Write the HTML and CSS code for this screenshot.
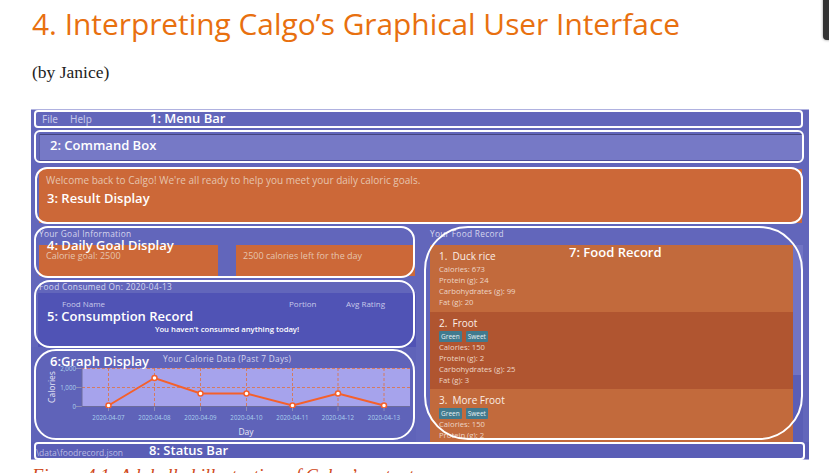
FILE: index.html
```html
<!DOCTYPE html>
<html lang="en">
<head>
    <meta charset="UTF-8">
    <title>Interpreting Calgo's Graphical User Interface</title>
    <link rel="stylesheet" href="styles.css">
</head>
<body>

<div class="side-tab"></div>

<h1>4. Interpreting Calgo’s Graphical User Interface</h1>
<p class="byline">(by Janice)</p>

<div class="figure">
    <div class="menu-bar"><span>File</span><span>Help</span></div>
    <div class="command-box"></div>
    <div class="result-box">Welcome back to Calgo! We're all ready to help you meet your daily caloric goals.</div>

    <div class="columns">
        <div class="left-col">
            <div class="pane-title">Your Goal Information</div>
            <div class="goal-row">
                <div class="goal-card">Calorie goal: 2500</div>
                <div class="goal-card">2500 calories left for the day</div>
            </div>
            <div class="pane-title consumed-title">Food Consumed On: 2020-04-13</div>
            <div class="consumed">
                <div class="consumed-head"><span class="col-name">Food Name</span><span class="col-portion">Portion</span><span>Avg Rating</span></div>
                <div class="consumed-empty">You haven't consumed anything today!</div>
            </div>
            <div class="graph">
                <div class="graph-title">Your Calorie Data (Past 7 Days)</div>
                <svg class="chart" width="375" height="74" viewBox="0 0 375 74">
                    <clipPath id="plot-clip"><rect x="0" y="-4" width="375" height="44"/></clipPath>
                    <rect x="46" y="0" width="328" height="38" fill="#a6a3ec"/>
                    <g stroke="#dc7448" stroke-width="1" stroke-dasharray="3 2" stroke-opacity=".85" fill="none">
                        <path d="M46 .5H374M46 19.5H374"/>
                        <path d="M72.5 0V38M118.5 0V38M164.5 0V38M210.5 0V38M256.5 0V38M302 0V38M348 0V38"/>
                    </g>
                    <g stroke="#8f8fb8" stroke-width="1">
                        <path d="M72.5 38V43M118.5 38V43M164.5 38V43M210.5 38V43M256.5 38V43M302 38V43M348 38V43"/>
                        <path d="M40 .5H46M40 19.5H46M40 38.5H46"/>
                    </g>
                    <path d="M46 0V38.5H374" fill="none" stroke="#6c6c9c" stroke-width="1"/>
                    <polyline points="72.5,37.5 118.5,10 164.5,25.5 210.5,25.5 256.5,37.5 302,25.5 348,37.5" fill="none" stroke="#f5602a" stroke-width="2"/>
                    <g fill="#fff" stroke="#f5602a" stroke-width="1.5" clip-path="url(#plot-clip)">
                        <circle cx="72.5" cy="37.5" r="2.5"/>
                        <circle cx="118.5" cy="10" r="2.5"/>
                        <circle cx="164.5" cy="25.5" r="2.5"/>
                        <circle cx="210.5" cy="25.5" r="2.5"/>
                        <circle cx="256.5" cy="37.5" r="2.5"/>
                        <circle cx="302" cy="25.5" r="2.5"/>
                        <circle cx="348" cy="37.5" r="2.5"/>
                    </g>
                    <g class="tick-y" text-anchor="end">
                        <text x="40" y="2.5">2,000</text>
                        <text x="40" y="21.5">1,000</text>
                        <text x="40" y="40.5">0</text>
                    </g>
                    <g class="tick-x" text-anchor="middle">
                        <text x="72.5" y="51.5">2020-04-07</text>
                        <text x="118.5" y="51.5">2020-04-08</text>
                        <text x="164.5" y="51.5">2020-04-09</text>
                        <text x="210.5" y="51.5">2020-04-10</text>
                        <text x="256.5" y="51.5">2020-04-11</text>
                        <text x="302" y="51.5">2020-04-12</text>
                        <text x="348" y="51.5">2020-04-13</text>
                    </g>
                    <text class="axis-name" x="210" y="67" text-anchor="middle">Day</text>
                    <text class="axis-name" transform="translate(19 19) rotate(-90)" text-anchor="middle">Calories</text>
                </svg>
            </div>
        </div>

        <div class="right-col">
            <div class="pane-title">Your Food Record</div>
            <div class="food-scroll">
                <div class="food-list">
                    <div class="food-card">
                        <div class="food-name">1.&nbsp; Duck rice</div>
                        <div>Calories: 673</div>
                        <div>Protein (g): 24</div>
                        <div>Carbohydrates (g): 99</div>
                        <div>Fat (g): 20</div>
                    </div>
                    <div class="food-card dark">
                        <div class="food-name">2.&nbsp; Froot</div>
                        <div class="tags"><span>Green</span><span>Sweet</span></div>
                        <div>Calories: 150</div>
                        <div>Protein (g): 2</div>
                        <div>Carbohydrates (g): 25</div>
                        <div>Fat (g): 3</div>
                    </div>
                    <div class="food-card">
                        <div class="food-name">3.&nbsp; More Froot</div>
                        <div class="tags"><span>Green</span><span>Sweet</span></div>
                        <div>Calories: 150</div>
                        <div>Protein (g): 2</div>
                    </div>
                </div>
                <div class="scrollbar"><div class="thumb"></div></div>
            </div>
        </div>
    </div>

    <div class="status-bar">\data\foodrecord.json</div>

    <!-- white outlines and labels drawn on top of the screenshot -->
    <div class="ring ring-1"></div>
    <div class="ring ring-2"></div>
    <div class="ring ring-3"></div>
    <div class="ring ring-4"></div>
    <div class="ring ring-5"></div>
    <div class="ring ring-6"></div>
    <div class="ring ring-7"></div>
    <div class="ring ring-8"></div>
    <div class="label label-1">1: Menu Bar</div>
    <div class="label label-2">2: Command Box</div>
    <div class="label label-3">3: Result Display</div>
    <div class="label label-4">4: Daily Goal Display</div>
    <div class="label label-5">5: Consumption Record</div>
    <div class="label label-6">6:Graph Display</div>
    <div class="label label-7">7: Food Record</div>
    <div class="label label-8">8: Status Bar</div>
</div>

<p class="caption">Figure 4.1: A labelled illustration of Calgo’s output</p>

</body>
</html>
```

FILE: styles.css
```css
html, body {
    height: 473px;
    overflow: hidden;
}

body {
    margin: 0;
    padding-left: 31px;
    background-color: #fff;
    font-family: "Liberation Serif", serif;
    position: relative;
}

h1 {
    margin: 0;
    padding: 3px 0 0 1px;
    font-family: "Open Sans", sans-serif;
    font-weight: 400;
    font-size: 29.85px;
    line-height: 41px;
    color: #e8700f;
}

.byline {
    margin: 0;
    padding: 18px 0 0 1px;
    font-size: 17.5px;
    line-height: 20px;
    color: #222;
}

.side-tab {
    position: absolute;
    top: -4px;
    right: -6px;
    width: 12px;
    height: 44px;
    background-color: #333;
    border-radius: 4px;
    box-shadow: 0 0 3px #888;
}

.figure {
    position: relative;
    box-sizing: border-box;
    width: 778px;
    height: 351px;
    margin-top: 27px;
    padding-top: 2px;
    background-color: #6266bb;
    border-top: 1px solid #b0b2e0;
    font-family: "Open Sans", sans-serif;
    color: #fff;
}

.menu-bar {
    height: 16px;
    padding-left: 11px;
    display: flex;
    gap: 12px;
    font-family: "Noto Sans", sans-serif;
    font-size: 10px;
    line-height: 14px;
    color: #c5c6e8;
}

.command-box {
    height: 25px;
    margin: 6px 7px 0 8px;
    background-color: #7679c6;
    border-top: 1px solid #44447e;
    border-bottom: 1px solid #4d4f99;
    border-left: 1px solid #5a5da8;
}

.result-box {
    height: 54px;
    margin: 8px 7px 0 8px;
    padding: 4px 0 0 7px;
    box-sizing: border-box;
    background-color: #cc6838;
    font-size: 10px;
    line-height: 14px;
    color: #e6c4ae;
}

.columns {
    display: flex;
    height: 219px;
}

.left-col {
    width: 385px;
    padding-left: 8px;
    padding-top: 6px;
    box-sizing: border-box;
}

.pane-title {
    height: 16px;
    font-size: 8.3px;
    line-height: 10px;
    letter-spacing: .3px;
    color: #d6d6ee;
}

.goal-row {
    display: flex;
    gap: 18px;
}

.goal-card {
    width: 179px;
    height: 31px;
    box-sizing: border-box;
    padding: 4px 0 0 7px;
    background-color: #cc6838;
    font-size: 9px;
    line-height: 14px;
    color: #e6c4ae;
}

.pane-title.consumed-title {
    margin-top: 6px;
    height: 11px;
}

.consumed {
    height: 54px;
    margin-left: -1px;
    background-color: #5053b5;
    font-size: 8px;
}

.consumed-head {
    display: flex;
    padding-top: 5px;
    line-height: 12px;
    color: #c8c9ea;
}

.col-name {
    margin-left: 24px;
    width: 227px;
}

.col-portion {
    width: 57px;
}

.consumed-empty {
    margin-top: 13px;
    font-size: 7.7px;
    font-weight: 600;
    line-height: 12px;
    text-align: center;
}

.graph {
    height: 95px;
    margin-left: -8px;
    background-color: #5f63b9;
}

.graph-title {
    height: 17px;
    padding: 7px 0 0 132px;
    box-sizing: border-box;
    font-size: 8.3px;
    line-height: 10px;
    letter-spacing: .3px;
    color: #d6d6ee;
    white-space: nowrap;
}

.chart {
    display: block;
    margin-top: 4px;
    margin-left: 5px;
    overflow: visible;
}

.tick-y, .tick-x {
    font-size: 6.2px;
    fill: #a9d0ee;
}

.axis-name {
    font-size: 8.5px;
    fill: #e6e6f6;
}

.right-col {
    flex: 1;
    padding-left: 14px;
    padding-top: 6px;
    box-sizing: border-box;
}

.food-scroll {
    display: flex;
    height: 197px;
    overflow: hidden;
}

.food-list {
    width: 363px;
    font-size: 7.7px;
    line-height: 11px;
    color: #edd5c6;
}

.food-card {
    box-sizing: border-box;
    height: 67px;
    padding: 5px 0 0 9px;
    background-color: #c26a3c;
}

.food-card.dark {
    height: 77px;
    background-color: #b05530;
}

.food-name {
    font-size: 10px;
    line-height: 12px;
    margin-bottom: 2px;
    color: #fbeee6;
}

.tags {
    display: flex;
    gap: 4px;
    height: 11px;
}

.tags span {
    padding: 0 2px;
    background-color: #417a8e;
    border-radius: 1px;
    font-size: 6.5px;
    color: #e8f0f2;
}

.scrollbar {
    width: 10px;
    background-color: #5a5eb6;
}

.thumb {
    height: 130px;
    background-color: #7174c4;
}

.status-bar {
    height: 17px;
    padding-left: 5px;
    background-color: #5a5eb6;
    border-bottom: 1px solid #a8aadc;
    font-size: 8.5px;
    line-height: 22px;
    color: #b9bbe2;
    white-space: nowrap;
    overflow: hidden;
}

.caption {
    margin: 6px 0 0 1px;
    font-style: italic;
    font-size: 18.5px;
    line-height: 20px;
    color: #d04a20;
}

/* annotations */
.ring {
    position: absolute;
    box-sizing: border-box;
    border: 2px solid #fff;
}

.ring-1 { left: 3px; top: 0; width: 769px; height: 18px; border-radius: 4px; }
.ring-2 { left: 3px; top: 20px; width: 770px; height: 33px; border-radius: 6px; }
.ring-3 { left: 4px; top: 57px; width: 768px; height: 57px; border-radius: 12px; }
.ring-4 { left: 3px; top: 116px; width: 381px; height: 52px; border-radius: 14px; }
.ring-5 { left: 3px; top: 170px; width: 381px; height: 68px; border-radius: 16px; }
.ring-6 { left: 3px; top: 239px; width: 381px; height: 91px; border-radius: 22px; }
.ring-7 { left: 393px; top: 116px; width: 379px; height: 214px; border-radius: 44px; }
.ring-8 { left: 3px; top: 332px; width: 771px; height: 18px; border-radius: 4px; }

.label {
    position: absolute;
    font-family: "Open Sans", sans-serif;
    font-weight: 600;
    font-size: 13px;
    line-height: 16px;
    color: #fff;
    white-space: nowrap;
}

.label-1 { left: 119px; top: 0; }
.label-2 { left: 19px; top: 27px; }
.label-3 { left: 16px; top: 80px; }
.label-4 { left: 16px; top: 127px; }
.label-5 { left: 16px; top: 198px; }
.label-6 { left: 19px; top: 243px; }
.label-7 { left: 538px; top: 134px; }
.label-8 { left: 118px; top: 332px; }
```
